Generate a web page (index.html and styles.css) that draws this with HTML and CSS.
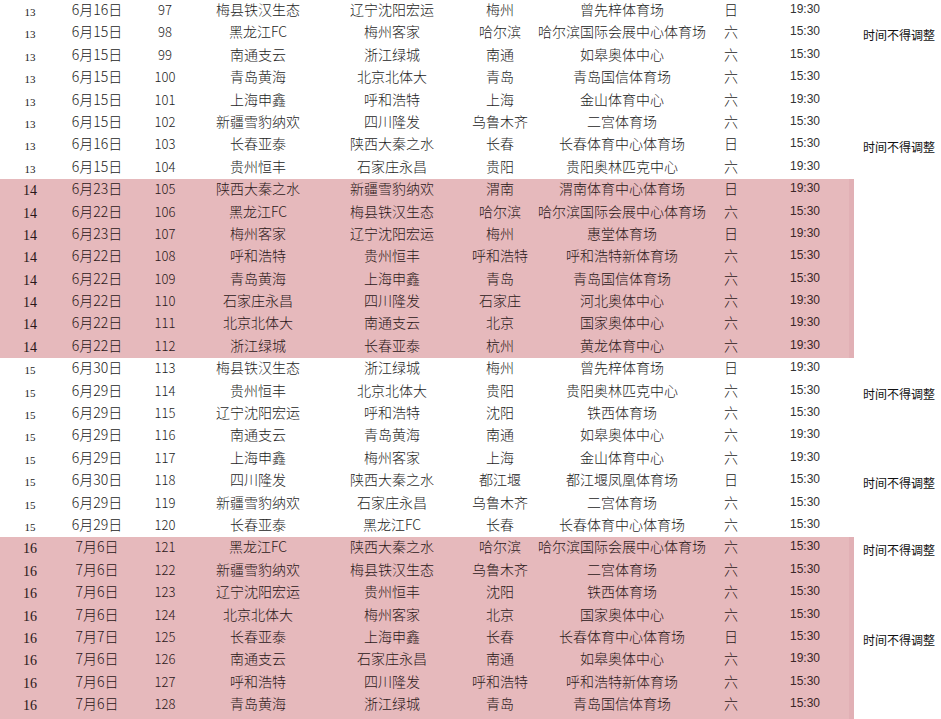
FILE: index.html
```html
<!DOCTYPE html>
<html lang="zh-CN">
<head>
<meta charset="utf-8">
<title>赛程</title>
<link rel="stylesheet" href="styles.css">
</head>
<body>
<div class="sheet">
  <section class="band">
    <div class="row"><span class="rd">13</span><span>6月16日</span><span class="no">97</span><span>梅县铁汉生态</span><span>辽宁沈阳宏运</span><span>梅州</span><span>曾先梓体育场</span><span>日</span><span class="tm">19:30</span><span class="note"></span></div>
    <div class="row"><span class="rd">13</span><span>6月15日</span><span class="no">98</span><span>黑龙江FC</span><span>梅州客家</span><span>哈尔滨</span><span>哈尔滨国际会展中心体育场</span><span>六</span><span class="tm">15:30</span><span class="note">时间不得调整</span></div>
    <div class="row"><span class="rd">13</span><span>6月15日</span><span class="no">99</span><span>南通支云</span><span>浙江绿城</span><span>南通</span><span>如皋奥体中心</span><span>六</span><span class="tm">15:30</span><span class="note"></span></div>
    <div class="row"><span class="rd">13</span><span>6月15日</span><span class="no">100</span><span>青岛黄海</span><span>北京北体大</span><span>青岛</span><span>青岛国信体育场</span><span>六</span><span class="tm">15:30</span><span class="note"></span></div>
    <div class="row"><span class="rd">13</span><span>6月15日</span><span class="no">101</span><span>上海申鑫</span><span>呼和浩特</span><span>上海</span><span>金山体育中心</span><span>六</span><span class="tm">19:30</span><span class="note"></span></div>
    <div class="row"><span class="rd">13</span><span>6月15日</span><span class="no">102</span><span>新疆雪豹纳欢</span><span>四川隆发</span><span>乌鲁木齐</span><span>二宫体育场</span><span>六</span><span class="tm">15:30</span><span class="note"></span></div>
    <div class="row"><span class="rd">13</span><span>6月16日</span><span class="no">103</span><span>长春亚泰</span><span>陕西大秦之水</span><span>长春</span><span>长春体育中心体育场</span><span>日</span><span class="tm">15:30</span><span class="note">时间不得调整</span></div>
    <div class="row"><span class="rd">13</span><span>6月15日</span><span class="no">104</span><span>贵州恒丰</span><span>石家庄永昌</span><span>贵阳</span><span>贵阳奥林匹克中心</span><span>六</span><span class="tm">19:30</span><span class="note"></span></div>
  </section>
  <section class="band pink">
    <div class="row"><span class="rd">14</span><span>6月23日</span><span class="no">105</span><span>陕西大秦之水</span><span>新疆雪豹纳欢</span><span>渭南</span><span>渭南体育中心体育场</span><span>日</span><span class="tm">19:30</span><span class="note"></span></div>
    <div class="row"><span class="rd">14</span><span>6月22日</span><span class="no">106</span><span>黑龙江FC</span><span>梅县铁汉生态</span><span>哈尔滨</span><span>哈尔滨国际会展中心体育场</span><span>六</span><span class="tm">15:30</span><span class="note"></span></div>
    <div class="row"><span class="rd">14</span><span>6月23日</span><span class="no">107</span><span>梅州客家</span><span>辽宁沈阳宏运</span><span>梅州</span><span>惠堂体育场</span><span>日</span><span class="tm">19:30</span><span class="note"></span></div>
    <div class="row"><span class="rd">14</span><span>6月22日</span><span class="no">108</span><span>呼和浩特</span><span>贵州恒丰</span><span>呼和浩特</span><span>呼和浩特新体育场</span><span>六</span><span class="tm">15:30</span><span class="note"></span></div>
    <div class="row"><span class="rd">14</span><span>6月22日</span><span class="no">109</span><span>青岛黄海</span><span>上海申鑫</span><span>青岛</span><span>青岛国信体育场</span><span>六</span><span class="tm">15:30</span><span class="note"></span></div>
    <div class="row"><span class="rd">14</span><span>6月22日</span><span class="no">110</span><span>石家庄永昌</span><span>四川隆发</span><span>石家庄</span><span>河北奥体中心</span><span>六</span><span class="tm">19:30</span><span class="note"></span></div>
    <div class="row"><span class="rd">14</span><span>6月22日</span><span class="no">111</span><span>北京北体大</span><span>南通支云</span><span>北京</span><span>国家奥体中心</span><span>六</span><span class="tm">19:30</span><span class="note"></span></div>
    <div class="row"><span class="rd">14</span><span>6月22日</span><span class="no">112</span><span>浙江绿城</span><span>长春亚泰</span><span>杭州</span><span>黄龙体育中心</span><span>六</span><span class="tm">19:30</span><span class="note"></span></div>
  </section>
  <section class="band">
    <div class="row"><span class="rd">15</span><span>6月30日</span><span class="no">113</span><span>梅县铁汉生态</span><span>浙江绿城</span><span>梅州</span><span>曾先梓体育场</span><span>日</span><span class="tm">19:30</span><span class="note"></span></div>
    <div class="row"><span class="rd">15</span><span>6月29日</span><span class="no">114</span><span>贵州恒丰</span><span>北京北体大</span><span>贵阳</span><span>贵阳奥林匹克中心</span><span>六</span><span class="tm">15:30</span><span class="note">时间不得调整</span></div>
    <div class="row"><span class="rd">15</span><span>6月29日</span><span class="no">115</span><span>辽宁沈阳宏运</span><span>呼和浩特</span><span>沈阳</span><span>铁西体育场</span><span>六</span><span class="tm">15:30</span><span class="note"></span></div>
    <div class="row"><span class="rd">15</span><span>6月29日</span><span class="no">116</span><span>南通支云</span><span>青岛黄海</span><span>南通</span><span>如皋奥体中心</span><span>六</span><span class="tm">19:30</span><span class="note"></span></div>
    <div class="row"><span class="rd">15</span><span>6月29日</span><span class="no">117</span><span>上海申鑫</span><span>梅州客家</span><span>上海</span><span>金山体育中心</span><span>六</span><span class="tm">19:30</span><span class="note"></span></div>
    <div class="row"><span class="rd">15</span><span>6月30日</span><span class="no">118</span><span>四川隆发</span><span>陕西大秦之水</span><span>都江堰</span><span>都江堰凤凰体育场</span><span>日</span><span class="tm">15:30</span><span class="note">时间不得调整</span></div>
    <div class="row"><span class="rd">15</span><span>6月29日</span><span class="no">119</span><span>新疆雪豹纳欢</span><span>石家庄永昌</span><span>乌鲁木齐</span><span>二宫体育场</span><span>六</span><span class="tm">15:30</span><span class="note"></span></div>
    <div class="row"><span class="rd">15</span><span>6月29日</span><span class="no">120</span><span>长春亚泰</span><span>黑龙江FC</span><span>长春</span><span>长春体育中心体育场</span><span>六</span><span class="tm">15:30</span><span class="note"></span></div>
  </section>
  <section class="band pink last">
    <div class="row"><span class="rd">16</span><span>7月6日</span><span class="no">121</span><span>黑龙江FC</span><span>陕西大秦之水</span><span>哈尔滨</span><span>哈尔滨国际会展中心体育场</span><span>六</span><span class="tm">15:30</span><span class="note">时间不得调整</span></div>
    <div class="row"><span class="rd">16</span><span>7月6日</span><span class="no">122</span><span>新疆雪豹纳欢</span><span>梅县铁汉生态</span><span>乌鲁木齐</span><span>二宫体育场</span><span>六</span><span class="tm">15:30</span><span class="note"></span></div>
    <div class="row"><span class="rd">16</span><span>7月6日</span><span class="no">123</span><span>辽宁沈阳宏运</span><span>贵州恒丰</span><span>沈阳</span><span>铁西体育场</span><span>六</span><span class="tm">15:30</span><span class="note"></span></div>
    <div class="row"><span class="rd">16</span><span>7月6日</span><span class="no">124</span><span>北京北体大</span><span>梅州客家</span><span>北京</span><span>国家奥体中心</span><span>六</span><span class="tm">15:30</span><span class="note"></span></div>
    <div class="row"><span class="rd">16</span><span>7月7日</span><span class="no">125</span><span>长春亚泰</span><span>上海申鑫</span><span>长春</span><span>长春体育中心体育场</span><span>日</span><span class="tm">15:30</span><span class="note">时间不得调整</span></div>
    <div class="row"><span class="rd">16</span><span>7月6日</span><span class="no">126</span><span>南通支云</span><span>石家庄永昌</span><span>南通</span><span>如皋奥体中心</span><span>六</span><span class="tm">19:30</span><span class="note"></span></div>
    <div class="row"><span class="rd">16</span><span>7月6日</span><span class="no">127</span><span>呼和浩特</span><span>四川隆发</span><span>呼和浩特</span><span>呼和浩特新体育场</span><span>六</span><span class="tm">15:30</span><span class="note"></span></div>
    <div class="row"><span class="rd">16</span><span>7月6日</span><span class="no">128</span><span>青岛黄海</span><span>浙江绿城</span><span>青岛</span><span>青岛国信体育场</span><span>六</span><span class="tm">15:30</span><span class="note"></span></div>
  </section>
</div>
</body>
</html>
```

FILE: styles.css
```css
html, body {
  margin: 0;
  padding: 0;
  background: #ffffff;
}

body {
  width: 941px;
  height: 719px;
  overflow: hidden;
  font-family: "Noto Sans CJK SC", "Liberation Sans", sans-serif;
  font-size: 14px;
  font-weight: 300;
  color: #1c1c1c;
}

.sheet {
  display: flex;
  flex-direction: column;
}

.band.pink {
  background: linear-gradient(to right, #e6b9bc 0, #e6b9bc 849px, #e1b0b5 849px, #e1b0b5 854px, #ffffff 854px);
  color: #2a1718;
}

.band.last {
  padding-bottom: 3px;
}

.row {
  display: grid;
  grid-template-columns: 60px 74px 62px 124px 144px 72px 172px 46px 100px 87px;
  height: 22.4px;
  line-height: 19px;
  text-align: center;
  white-space: nowrap;
}

.row > span {
  display: block;
}

.rd {
  font-family: "Liberation Serif", serif;
  font-size: 11px;
  font-weight: 400;
  padding-top: 3px;
}

.pink .rd {
  font-size: 14px;
  padding-top: 2px;
}

.no {
  font-size: 13px;
}

.tm {
  font-family: "Liberation Sans", sans-serif;
  font-weight: 400;
  font-size: 12px;
  color: #333333;
  padding-left: 2px;
}

.pink .tm {
  color: #3a2526;
}

.note {
  font-size: 12px;
  font-weight: 400;
  color: #111111;
  padding-top: 3px;
  text-align: left;
  padding-left: 9px;
}
```
